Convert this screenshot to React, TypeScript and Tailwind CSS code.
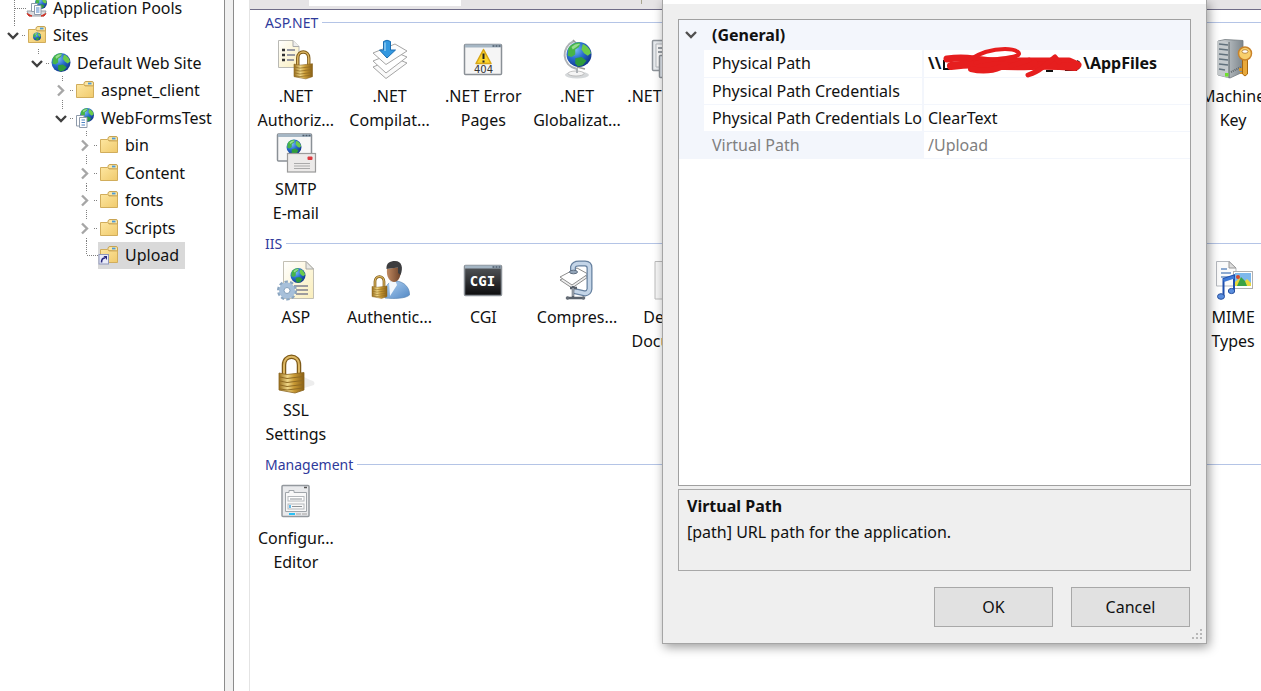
import type { ReactNode } from "react";

/* ---------- shared drawing parts ---------- */

function Defs() {
  return (
    <svg width="0" height="0" className="absolute" aria-hidden="true">
      <defs>
        <radialGradient id="sea" cx="0.35" cy="0.3" r="0.8">
          <stop offset="0" stopColor="#7fc0f5" />
          <stop offset="0.45" stopColor="#2a6fd0" />
          <stop offset="1" stopColor="#0c2c80" />
        </radialGradient>
        <linearGradient id="brass" x1="0" x2="1" y1="0" y2="0">
          <stop offset="0" stopColor="#9a6f1c" />
          <stop offset="0.35" stopColor="#f0d888" />
          <stop offset="0.6" stopColor="#c99a35" />
          <stop offset="1" stopColor="#8a6015" />
        </linearGradient>
        <linearGradient id="folder" x1="0" x2="1" y1="0" y2="1">
          <stop offset="0" stopColor="#fde6a0" />
          <stop offset="1" stopColor="#f0ca6c" />
        </linearGradient>
        <linearGradient id="paper" x1="0" x2="1" y1="0" y2="1">
          <stop offset="0" stopColor="#ffffff" />
          <stop offset="1" stopColor="#faeebb" />
        </linearGradient>
        <linearGradient id="steel" x1="0" x2="1" y1="0" y2="0">
          <stop offset="0" stopColor="#d8dcdf" />
          <stop offset="1" stopColor="#7d868c" />
        </linearGradient>
        <linearGradient id="dark" x1="0" x2="0" y1="0" y2="1">
          <stop offset="0" stopColor="#55585c" />
          <stop offset="1" stopColor="#0c0c0d" />
        </linearGradient>
        <linearGradient id="shirt" x1="0" x2="1" y1="0" y2="1">
          <stop offset="0" stopColor="#b4d4f4" />
          <stop offset="1" stopColor="#5288c4" />
        </linearGradient>
        <linearGradient id="skin" x1="0" x2="1" y1="0" y2="0">
          <stop offset="0" stopColor="#c08a62" />
          <stop offset="1" stopColor="#6e432a" />
        </linearGradient>
      </defs>
    </svg>
  );
}

function Globe({ cx, cy, r }: { cx: number; cy: number; r: number }) {
  return (
    <g transform={`translate(${cx} ${cy}) scale(${r / 10})`}>
      <circle r="10" fill="url(#sea)" />
      <path d="M-8.500-5C-6-9-1-10 1-9.500L0-6-3-4-3 0-6 2-9 1Z" fill="#47b548" />
      <path d="M3-8.500C7-7 9-4 9.500-1L7 1 4-1 2-4Z" fill="#6ccc4a" />
      <path d="M-3 3 2 2 6 5 3 8.500-1 9.500-3 7Z" fill="#2f9c3c" />
      <path d="M-6-6Q-3-9 1-8.500L-2-6-5-4Z" fill="#b8ecae" opacity="0.7" />
    </g>
  );
}

function Padlock({ x, y, s }: { x: number; y: number; s: number }) {
  return (
    <g transform={`translate(${x} ${y}) scale(${s})`}>
      <path d="M5 21V11C5 0 20 0 20 11V21" fill="none" stroke="#7e5a18" strokeWidth="4.500" />
      <path d="M5 21V11C5 0 20 0 20 11V21" fill="none" stroke="#dcb763" strokeWidth="2" />
      <path d="M0 19 8 20.500 25 18.500V36L16 39 0 36Z" fill="url(#brass)" stroke="#8a6420" strokeWidth="0.800" />
      <path d="M1 23 8 24.500 24 22.500M1 27 8 28.500 24 26.500M1 31 8 32.500 24 30.500M1 35 8 36 24 34" fill="none" stroke="#8f6a22" strokeWidth="1" />
    </g>
  );
}

function Box({ children }: { children: ReactNode }) {
  return (
    <svg viewBox="0 0 40 40" className="size-10 shrink-0 overflow-visible" aria-hidden="true">
      {children}
    </svg>
  );
}

/* ---------- feature icons ---------- */

const AuthorizationIcon = () => (
  <Box>
    <path d="M2.500 1.500H17L23 7.500V28.500H2.500Z" fill="url(#paper)" stroke="#b9b9b4" />
    <path d="M17 1.500V7.500H23" fill="#eee" stroke="#aaa" />
    <path d="M6 11h3M6 16h3M6 21h3" stroke="#333" strokeWidth="2.500" />
    <path d="M11 11h8M11 16h8M11 21h7" stroke="#777b90" strokeWidth="1.500" />
    <Padlock x={18} y={11} s={0.74} />
  </Box>
);

const CompilationIcon = () => (
  <Box>
    <path d="M3 28 25 19 37 24 16 39.500Z" fill="#fafafa" stroke="#a5a5a5" />
    <path d="M3 22 25 13 37 18 16 34Z" fill="#fff" stroke="#a5a5a5" />
    <path d="M3 14 25 5 37 12 16 25.500Z" fill="#fdfdfd" stroke="#a5a5a5" />
    <path d="M13.500 2.500Q17 0 20.500 2.500V11H25.500L17 19 9.500 11H13.500Z" fill="#3398e0" stroke="#1c6fb4" />
    <path d="M15 3.500V12" stroke="#8fccf5" strokeWidth="1.500" />
  </Box>
);

function WindowFrame({ fill, x = 1.5, y = 5.5, w = 37, h = 30 }: { fill: string; x?: number; y?: number; w?: number; h?: number }) {
  return (
    <g>
      <rect x={x} y={y} width={w} height={h} rx="1" fill={fill} stroke="#8a9096" strokeWidth="1.500" />
      <rect x={x + 0.5} y={y} width={w - 1} height="3" fill="#a5b6c4" />
      <path d={`M${x + w - 9} ${y + 1.5}h2m1 0h2m1 0h2`} stroke="#4c5a6a" strokeWidth="1.500" />
    </g>
  );
}

const ErrorPagesIcon = () => (
  <Box>
    <WindowFrame fill="#f5f5f5" />
    <path d="M20.500 10.500 28 24.500H13Z" fill="#fbd52c" stroke="#d8a515" strokeWidth="1.500" strokeLinejoin="round" />
    <path d="M20.500 14.500V20M20.500 21.500V23.500" stroke="#222" strokeWidth="2" />
    <text x="20.500" y="34" textAnchor="middle" fontSize="10" fill="#333" fontFamily="DejaVu Sans, sans-serif">404</text>
  </Box>
);

const GlobalizationIcon = () => (
  <Box>
    <ellipse cx="20" cy="36" rx="12" ry="3.500" fill="#d5d8da" />
    <ellipse cx="19" cy="34.500" rx="8" ry="2.500" fill="#f5f5f5" stroke="#aaa" strokeWidth="0.700" />
    <path d="M17 2C4 8 4 26 20 30V34" fill="none" stroke="#aeb2b6" strokeWidth="2" />
    <path d="M16 1 19 4M20 28 28 30" stroke="#999" strokeWidth="1.500" />
    <Globe cx={22} cy={15.500} r={12.500} />
  </Box>
);

const ProfileIcon = () => (
  <Box>
    <rect x="1.500" y="1.500" width="30" height="30" rx="1" fill="#e9ecef" stroke="#8f959b" strokeWidth="1.500" />
    <path d="M5 5H28V28H5Z" fill="#fbfbfb" stroke="#b5babf" />
    <path d="M7 9H26M7 13H20" stroke="#9aa0a6" strokeWidth="2" />
    <rect x="8.500" y="16.500" width="30" height="22" rx="1" fill="#e4eaf0" stroke="#8f959b" strokeWidth="1.500" />
    <path d="M12 21H34V35H12Z" fill="#cfe0f2" />
  </Box>
);

const MachineKeyIcon = () => (
  <Box>
    <path d="M5 2 12 0.500 30 1.500V33L17 39 5 36Z" fill="url(#steel)" stroke="#737b80" strokeWidth="0.800" />
    <path d="M5 2 16 3V39L5 36Z" fill="#c5cacd" />
    <path d="M6 5 15 6M6 10 15 11M6 15 15 16M6 20 15 21M6 25 15 26M6 30 12 31" stroke="#62717d" strokeWidth="1.500" />
    <path d="M16 3V39" stroke="#555e63" />
    <rect x="12" y="34" width="3.500" height="3.500" fill="#6fe02d" />
    <path d="M18 33 28 28" stroke="#60676c" strokeWidth="2" strokeDasharray="1 1" />
    <path d="M29.500 20H34.500V35L32 37 29.500 35Z" fill="#e9a93a" stroke="#a8680f" />
    <path d="M29 29h-3v3h3M29 33h-2v2h2" fill="#d6962c" />
    <circle cx="32" cy="14.500" r="6.500" fill="#f8cf6c" stroke="#c9832a" strokeWidth="1.500" />
    <ellipse cx="32" cy="12.500" rx="3" ry="1.800" fill="#fff" stroke="#b0762a" strokeWidth="0.800" />
  </Box>
);

const SmtpIcon = () => (
  <Box>
    <WindowFrame fill="#f7f7f7" x={1.5} y={2} w={34} h={27} />
    <Globe cx={18} cy={15} r={7.5} />
    <rect x="11.500" y="21.500" width="28" height="18.500" fill="#eceae9" stroke="#9a9a9a" strokeWidth="1.200" />
    <path d="M18 31.500H34M18 34H34M18 36.500H34" stroke="#aaa" strokeWidth="1.200" />
    <rect x="31.500" y="24.500" width="5" height="3.500" rx="1" fill="#dc3a40" />
  </Box>
);

const AspIcon = () => (
  <Box>
    <path d="M7.500 1.500H30L37.500 9V38.500H7.500Z" fill="url(#paper)" stroke="#c3c0b4" />
    <path d="M30 1.500V9H37.500Z" fill="#e8e8e4" stroke="#a8a8a4" />
    <Globe cx={22} cy={15.500} r={7.500} />
    <path d="M18 26H32M20 30H32M20 34H32" stroke="#80808e" strokeWidth="1.500" />
    <circle cx="11" cy="30.500" r="8.500" fill="none" stroke="#8aa5c0" strokeWidth="3" strokeDasharray="3.300 2.040" />
    <circle cx="11" cy="30.500" r="5.500" fill="none" stroke="#a7c0da" strokeWidth="5" />
    <circle cx="11" cy="30.500" r="3" fill="#fff" stroke="#7f9dbb" />
  </Box>
);

const AuthenticationIcon = () => (
  <Box>
    <path d="M15 38C14 27 18 21 25 21 34 21 40 28 39.500 35 36 38.500 24 39 15 38Z" fill="url(#shirt)" stroke="#5c86b4" strokeWidth="0.700" />
    <path d="M19 22 25 20 27 25 20 36Z" fill="#f3f8fc" />
    <path d="M17 9C16 17 20 22 24 22 29 22 32 15 30 7Z" fill="url(#skin)" />
    <path d="M16.500 9C16 3 20 1 25 1 32 1 33.500 8 30.500 15L28 13V7.500Z" fill="#3d3d3f" />
    <Padlock x={2} y={15} s={0.6} />
  </Box>
);

const CgiIcon = () => (
  <Box>
    <WindowFrame fill="url(#dark)" />
    <text x="19.500" y="25.500" textAnchor="middle" fontSize="14" fontWeight="700" fill="#fff" fontFamily="DejaVu Sans Mono, monospace">CGI</text>
  </Box>
);

const CompressionIcon = () => (
  <Box>
    <path d="M3 20 20 11 31 17 15 28Z" fill="#eee" stroke="#8d8d8d" />
    <path d="M3 17 20 8 31 14 15 25Z" fill="#fff" stroke="#8d8d8d" />
    <path d="M16 12V7Q17 3.500 22 3.500H28Q32.500 3.500 32.500 8V29Q32 33 28 33.500L17 31" fill="none" stroke="#66809f" strokeWidth="6" />
    <path d="M16 12V7Q17 3.500 22 3.500H28Q32.500 3.500 32.500 8V29Q32 33 28 33.500L17 31" fill="none" stroke="#c4d5e8" strokeWidth="3.500" />
    <ellipse cx="16.500" cy="12" rx="4" ry="1.800" fill="#92a4b8" stroke="#5e6d80" />
    <path d="M16 26V37M10 38H27M13 28H20" stroke="#59616b" strokeWidth="2.500" />
    <path d="M16 28V36" stroke="#c3cbd5" />
    <circle cx="10.500" cy="38" r="1.800" fill="#666d76" />
    <circle cx="26.500" cy="38" r="1.800" fill="#666d76" />
  </Box>
);

const DocumentIcon = () => (
  <Box>
    <path d="M4 1.500H30L37 8V39H4Z" fill="#f6f6f6" stroke="#bcbcbc" />
  </Box>
);

const MimeIcon = () => (
  <Box>
    <path d="M3.500 1.500H16L23 8V26H3.500Z" fill="#fbfbfb" stroke="#b5b9bf" />
    <path d="M16 1.500V8H23Z" fill="#ddd" stroke="#999" />
    <path d="M8 9H14M8 13H18M8 17H19" stroke="#6a90c4" strokeWidth="1.500" />
    <rect x="20.500" y="11.500" width="19" height="17" fill="#fff" stroke="#b0b0b0" />
    <rect x="22" y="13" width="16" height="13" fill="#7db8ec" />
    <path d="M22 26V22L27 18 31 22 34 19 38 23V26Z" fill="#e9d93b" />
    <path d="M24 26 28 17 32 21 34 26Z" fill="#3aa344" />
    <circle cx="25" cy="17" r="2" fill="#d94b2c" />
    <path d="M10.500 36V19L21 15.500V31" fill="none" stroke="#1f4fae" strokeWidth="2" />
    <path d="M10.500 20.500 21 17" stroke="#3f7ad6" strokeWidth="3" />
    <ellipse cx="8" cy="36.500" rx="3.500" ry="2.800" fill="#5a8ede" stroke="#274f9e" />
    <ellipse cx="18.500" cy="31" rx="3.200" ry="2.600" fill="#5a8ede" stroke="#274f9e" />
  </Box>
);

const SslIcon = () => (
  <Box>
    <path d="M25 36 38 32Q40 28 34 27L28 24Z" fill="#ededed" />
    <Padlock x={3} y={1} s={1} />
  </Box>
);

const ConfigIcon = () => (
  <Box>
    <rect x="6" y="4.500" width="27" height="31" rx="1" fill="#e9eaec" stroke="#94999e" strokeWidth="1.500" />
    <path d="M28 6.500H31" stroke="#555" strokeWidth="1.500" />
    <path d="M9.500 11.500H13V9.500H18V11.500H30.500V30.500H9.500Z" fill="#f8f8f8" stroke="#a0a5aa" />
    <rect x="12" y="15.500" width="16" height="4.500" fill="#fff" stroke="#b4b8bc" />
    <path d="M14 18H26M16 25.500H26" stroke="#8d9297" />
    <rect x="12" y="23" width="16" height="5" fill="none" stroke="#b4b8bc" />
    <path d="M14 24V27" stroke="#32a8e8" strokeWidth="1.500" />
    <path d="M13 33H19" stroke="#28c0f5" strokeWidth="2" />
    <path d="M20 33H25M26 33H31" stroke="#bbb" strokeWidth="1.500" />
  </Box>
);

/* ---------- tree ---------- */

type TreeIconName = "pools" | "sites" | "globe" | "folder" | "app" | "link";

function TreeIcon({ name }: { name: TreeIconName }) {
  const folder = (
    <g>
      <path d="M9 5.500V3Q9.500 1.500 11 1.500H17Q18.500 1.500 18.500 3V6Z" fill="#fbe6a4" stroke="#c9a452" />
      <path d="M13 3.500H16.500" stroke="#4d9ad8" strokeWidth="1.800" />
      <path d="M1.500 4.500H8.500L10 6H18.500V17.500H1.500Z" fill="url(#folder)" stroke="#d1ad5c" />
    </g>
  );
  return (
    <svg viewBox="0 0 20 20" className="size-5 shrink-0 overflow-visible" aria-hidden="true">
      {name === "pools" && (
        <g>
          <Globe cx={14} cy={5} r={6} />
          <path d="M0 13H19L17 18H2Z" fill="#d9dcdf" stroke="#9a9fa5" />
          <path d="M0 15.500 5 18H2ZM19 15.500 14 18H17Z" fill="#cf3327" stroke="#cf3327" />
          <path d="M4.500 5.500H10.500V13.500H4.500Z" fill="#fff" stroke="#8f9bab" />
          <path d="M7.500 7.500H14V16.500H7.500Z" fill="#fff" stroke="#8f9bab" />
          <path d="M9 10H12.500M9 12H12.500M9 14H12.500" stroke="#4d82c4" />
        </g>
      )}
      {name === "sites" && (
        <g>
          {folder}
          <Globe cx={10} cy={11.500} r={4} />
        </g>
      )}
      {name === "globe" && <Globe cx={10} cy={9.500} r={9.5} />}
      {name === "folder" && folder}
      {name === "app" && (
        <g>
          <Globe cx={12} cy={7} r={7} />
          <path d="M1.500 7.500H9V18H1.500Z" fill="#fff" stroke="#8f9bab" />
          <path d="M4.500 9.500H12V19.500H4.500Z" fill="#fff" stroke="#8f9bab" />
          <path d="M6.500 12H10M6.500 14.500H10M6.500 17H10" stroke="#4d82c4" />
        </g>
      )}
      {name === "link" && (
        <g>
          {folder}
          <rect x="0" y="9.500" width="9.500" height="9.500" fill="#e9ebf8" stroke="#8f97bb" />
          <path d="M2.500 17.500Q2.500 13 6 13" fill="none" stroke="#2a2a80" strokeWidth="1.600" />
          <path d="M4.500 11H8V15Z" fill="#2a2a80" />
        </g>
      )}
    </svg>
  );
}

type Branch = "none" | "open" | "closed";

function TreeLines({ branch, up, down }: { branch: Branch; up: boolean; down: boolean }) {
  const isLeaf = branch === "none";
  return (
    <svg viewBox="0 0 24 28" className="h-7 w-6 shrink-0" aria-hidden="true">
      <g stroke="#808080" strokeDasharray="1 1" fill="none">
        {up && <path d={isLeaf ? "M12.500 0V14" : "M12.500 0V5"} />}
        {down && <path d={isLeaf ? "M12.500 14V28" : "M12.500 24V28"} />}
        <path d={isLeaf ? "M13 14.500H24" : "M20 14.500H24"} />
      </g>
      {branch === "open" && <path d="M6 12 11 17 16 12" fill="none" stroke="#404040" strokeWidth="2.400" />}
      {branch === "closed" && <path d="M8 9.500 13 14.500 8 19.500" fill="none" stroke="#a6a6a6" strokeWidth="2.400" />}
    </svg>
  );
}

interface TreeNode {
  label: string;
  icon: TreeIconName;
  indent: string;
  branch: Branch;
  up?: boolean;
  down?: boolean;
  selected?: boolean;
}

const tree: TreeNode[] = [
  { label: "Application Pools", icon: "pools", indent: "pl-0.5", branch: "none", up: true, down: true },
  { label: "Sites", icon: "sites", indent: "pl-0.5", branch: "open", up: true },
  { label: "Default Web Site", icon: "globe", indent: "pl-6.5", branch: "open", up: true },
  { label: "aspnet_client", icon: "folder", indent: "pl-12.5", branch: "closed", up: true, down: true },
  { label: "WebFormsTest", icon: "app", indent: "pl-12.5", branch: "open", up: true },
  { label: "bin", icon: "folder", indent: "pl-18.5", branch: "closed", up: true, down: true },
  { label: "Content", icon: "folder", indent: "pl-18.5", branch: "closed", up: true, down: true },
  { label: "fonts", icon: "folder", indent: "pl-18.5", branch: "closed", up: true, down: true },
  { label: "Scripts", icon: "folder", indent: "pl-18.5", branch: "closed", up: true, down: true },
  { label: "Upload", icon: "link", indent: "pl-18.5", branch: "none", up: true, selected: true },
];

function ConnectionsTree() {
  return (
    <nav aria-label="Connections" className="w-56 shrink-0 overflow-hidden bg-white">
      <ul className="-mt-1.5 grid h-[275px] auto-rows-fr">
        {tree.map((node) => (
          <li key={node.label} className={`flex items-center ${node.indent}`}>
            <TreeLines branch={node.branch} up={!!node.up} down={!!node.down} />
            <a
              href="#"
              className={`flex h-full items-center gap-1.5 whitespace-nowrap pl-px pr-1.5 ${node.selected ? "bg-[#d9d9d9]" : ""}`}
            >
              <TreeIcon name={node.icon} />
              {node.label}
            </a>
          </li>
        ))}
      </ul>
    </nav>
  );
}

/* ---------- features view ---------- */

interface Feature {
  lines: string[];
  icon: ReactNode;
  place?: string;
}

function FeatureGroup({ title, features }: { title: string; features: Feature[] }) {
  return (
    <section>
      <header className="flex h-[35px] items-center gap-1 pl-[15px] pt-0.5">
        <h2 className="text-sm text-[#2f3a9b]">{title}</h2>
        <span className="h-px grow bg-[#b4c4e6]" />
      </header>
      <div className="-ml-px -mr-[19px] grid grid-cols-11">
        {features.map((f) => (
          <a
            key={f.lines.join(" ")}
            href="#"
            className={`flex h-[93px] flex-col items-center gap-[5px] whitespace-nowrap text-center leading-6 ${f.place ?? ""}`}
          >
            {f.icon}
            <span>
              {f.lines.map((line) => (
                <span key={line} className="block">
                  {line}
                </span>
              ))}
            </span>
          </a>
        ))}
      </div>
    </section>
  );
}

const aspNet: Feature[] = [
  { lines: [".NET", "Authoriz..."], icon: <AuthorizationIcon /> },
  { lines: [".NET", "Compilat..."], icon: <CompilationIcon /> },
  { lines: [".NET Error", "Pages"], icon: <ErrorPagesIcon /> },
  { lines: [".NET", "Globalizat..."], icon: <GlobalizationIcon /> },
  { lines: [".NET Profile"], icon: <ProfileIcon /> },
  { lines: ["Machine", "Key"], icon: <MachineKeyIcon />, place: "col-start-11" },
  { lines: ["SMTP", "E-mail"], icon: <SmtpIcon /> },
];

const iis: Feature[] = [
  { lines: ["ASP"], icon: <AspIcon /> },
  { lines: ["Authentic..."], icon: <AuthenticationIcon /> },
  { lines: ["CGI"], icon: <CgiIcon /> },
  { lines: ["Compres..."], icon: <CompressionIcon /> },
  { lines: ["Default", "Document"], icon: <DocumentIcon /> },
  { lines: ["MIME", "Types"], icon: <MimeIcon />, place: "col-start-11" },
  { lines: ["SSL", "Settings"], icon: <SslIcon /> },
];

const management: Feature[] = [{ lines: ["Configur...", "Editor"], icon: <ConfigIcon /> }];

function FeaturesView() {
  return (
    <main className="min-w-0 grow overflow-hidden border-l border-[#e4e4e4] bg-white">
      <div className="flex h-2.5 items-start border-b border-[#6f6c88] bg-[#e6e4e6] pl-[59px]">
        <div className="h-1.5 w-38 bg-white" />
        <div className="ml-45 h-1 w-px bg-[#a8a690]" />
      </div>
      <div className="-mt-1.5">
        <FeatureGroup title="ASP.NET" features={aspNet} />
        <FeatureGroup title="IIS" features={iis} />
        <FeatureGroup title="Management" features={management} />
      </div>
    </main>
  );
}

/* ---------- settings dialog ---------- */

function RedactedHost() {
  return (
    <svg viewBox="0 0 142 32" className="-my-2 inline-block h-8 w-[142px] overflow-visible align-middle" aria-hidden="true">
      <path d="M3 11V21M3 12H10M3 20H10M44 22H50M105 22H112M124 21H136M136 12Q141 14 137 20" stroke="#111" strokeWidth="2" fill="none" />
      <g fill="none" stroke="#e61e1e" strokeLinecap="round" strokeLinejoin="round">
        <path d="M6 10Q20 8 33 10T60 12 90 12 128 12L137 16" strokeWidth="7" />
        <path d="M10 17Q30 14 50 16T90 17 134 18" strokeWidth="8" />
        <path d="M30 20Q46 24 60 18L86 18 94 14" strokeWidth="6" />
        <path d="M28 11C40 3 52 0 64 0 76 0 82 5 75 7 66 10 55 9 34 14" strokeWidth="4" />
        <path d="M70 17 88 11M87 26Q96 23 102 18L114 8 118 13" strokeWidth="5" />
      </g>
    </svg>
  );
}

function PropertyGrid() {
  const nameCell = "truncate text-clip border-b border-r-2 border-[#f3f6fc] p-0 pl-2 text-left font-normal";
  const valueCell = "border-b border-[#f3f6fc] p-0 pl-1";
  return (
    <div className="h-[467px] border border-[#a0a0a0] bg-white">
      <table className="h-[139px] w-full table-fixed border-separate border-spacing-0 whitespace-nowrap">
        <colgroup>
          <col className="w-[25px]" />
          <col className="w-[220px]" />
          <col />
        </colgroup>
        <tbody>
          <tr className="bg-[#f3f6fc]">
            <td className="p-0">
              <svg viewBox="0 0 24 28" className="block h-7 w-6" aria-hidden="true">
                <path d="M7 11 12 16 17 11" fill="none" stroke="#505050" strokeWidth="2.400" />
              </svg>
            </td>
            <th colSpan={2} className="p-0 pl-2 text-left font-bold">
              (General)
            </th>
          </tr>
          <tr>
            <td className="bg-[#f3f6fc] p-0" />
            <th className={nameCell}>Physical Path</th>
            <td className={`${valueCell} font-bold`}>
              \\
              <RedactedHost />
              \AppFiles
            </td>
          </tr>
          <tr>
            <td className="bg-[#f3f6fc] p-0" />
            <th className={nameCell}>Physical Path Credentials</th>
            <td className={valueCell} />
          </tr>
          <tr>
            <td className="bg-[#f3f6fc] p-0" />
            <th className={nameCell}>Physical Path Credentials Lo</th>
            <td className={valueCell}>ClearText</td>
          </tr>
          <tr className="text-[#808080]">
            <td className="bg-[#f3f6fc] p-0" />
            <th className={`${nameCell} bg-[#f3f6fc]`}>Virtual Path</th>
            <td className={valueCell}>/Upload</td>
          </tr>
        </tbody>
      </table>
    </div>
  );
}

function AdvancedSettings() {
  const button = "h-10 w-[119px] border border-[#a8a8a8] bg-[#e1e1e1]";
  return (
    <div
      role="dialog"
      aria-label="(General)"
      className="absolute left-[662px] top-0 w-[545px] border border-t-0 border-[#a5a5a5] bg-[#efefef] shadow-[2px_3px_10px_rgba(0,0,0,0.4)]"
    >
      <div className="h-1 bg-white" />
      <div className="flex flex-col gap-[3px] px-[15px] pt-[15px]">
        <PropertyGrid />
        <div className="h-[82px] border border-[#a8a8a8] px-2 pt-[3px]">
          <h3 className="font-bold leading-[26px]">Virtual Path</h3>
          <p className="leading-[26px]">[path] URL path for the application.</p>
        </div>
      </div>
      <div className="flex justify-end gap-[18px] px-4 py-4">
        <button type="button" className={button}>
          OK
        </button>
        <button type="button" className={button}>
          Cancel
        </button>
      </div>
      <svg viewBox="0 0 12 12" className="absolute bottom-0.5 right-0.5 size-3" fill="#b8b8b8" aria-hidden="true">
        <path d="M8 0h2v2H8zM4 4h2v2H4zM8 4h2v2H8zM0 8h2v2H0zM4 8h2v2H4zM8 8h2v2H8z" />
      </svg>
    </div>
  );
}

export default function App() {
  return (
    <div className="relative flex min-h-screen overflow-hidden bg-white font-['Noto_Sans',sans-serif] text-base leading-6 text-[#111111]">
      <Defs />
      <ConnectionsTree />
      <div className="w-2.5 shrink-0 border-x border-[#8c8c8c] bg-[#f0f0f0]" />
      <div className="w-[15px] shrink-0" />
      <FeaturesView />
      <AdvancedSettings />
    </div>
  );
}
